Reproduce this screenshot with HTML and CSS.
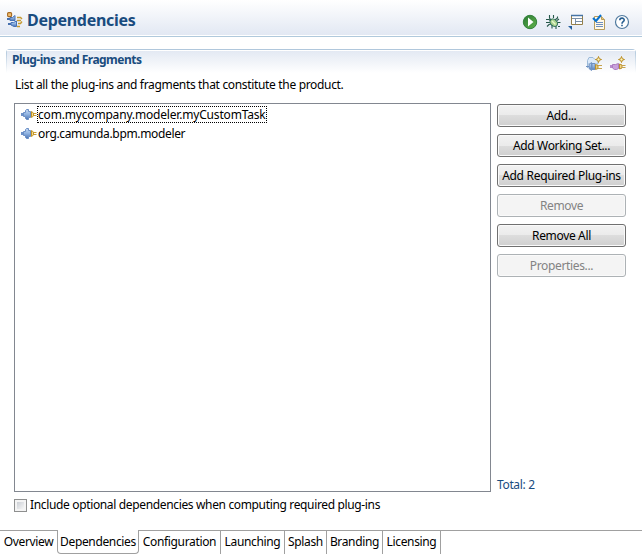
FILE: index.html
```
<!DOCTYPE html>
<html lang="en">
<head>
<meta charset="utf-8">
<title>Dependencies</title>
<link rel="stylesheet" href="styles.css">
</head>
<body>
<svg class="defs" aria-hidden="true">
  <defs>
    <linearGradient id="blue" x1="0" y1="0" x2="0" y2="1"><stop offset="0" stop-color="#c4daf5"/><stop offset=".5" stop-color="#8fb2e0"/><stop offset="1" stop-color="#4a75b5"/></linearGradient>
    <linearGradient id="green" x1="0" y1="0" x2="1" y2="1"><stop offset="0" stop-color="#2b7a35"/><stop offset="1" stop-color="#62b34c"/></linearGradient>
    <symbol id="plug" viewBox="0 0 16 11">
      <path d="M0 5.500H3" stroke="#6f92c8" stroke-width="3"/>
      <path d="M2.500 3.500H4.500V1.500L5.500.5H7.500V2.500H9.500V8.500H7.500V10.500H5.500L4.500 9.500V7.500H2.500Z" fill="url(#blue)" stroke="#6a8fc6"/>
      <path d="M10.500 2.500L12.500 4V7L10.500 8.500Z" fill="#f3dc8c" stroke="#c39428"/>
      <path d="M13 4.500H15.500M13 6.500H15.500" stroke="#c79b35"/>
    </symbol>
  </defs>
</svg>
<div class="editor">
  <header class="header">
    <svg class="page-icon" width="16" height="16" viewBox="0 0 16 16">
      <path d="M10 5.500H13.500L15 7M10 8.500H14M11 11.500H13.500L15 9.500M10 14.500H13" fill="none" stroke="#c69a30" stroke-width="1.400"/>
      <path d="M0 7H3M1 12H4" stroke="#456fae" stroke-width="2"/>
      <path d="M3 5.500H5.500L8 3.500V8.500H3Z" fill="url(#blue)" stroke="#4773b6"/>
      <path d="M4 10.500H6.500L9.500 9V14.500H7L4 13Z" fill="url(#blue)" stroke="#4773b6"/>
      <rect x=".6" y=".6" width="4" height="4" rx="1" fill="#efbd72" stroke="#a66a22" stroke-width="1.100"/>
    </svg>
    <h1>Dependencies</h1>
    <div class="toolbar">
      <svg width="16" height="16" viewBox="0 0 16 16"><circle cx="8" cy="8" r="6.700" fill="url(#green)" stroke="#34823c"/><path d="M6 3.500L11.500 8 6 12.500Z" fill="#fff"/></svg>
      <svg width="16" height="16" viewBox="0 0 16 16"><path d="M4.500 1V4L6 6M8.500 1V4M1 5.500H4L6 7M1 8.500H5M2 12.500L4 10.500 6 10M7 14.500V11M11 15V12M13 12.500H15M12 8.500H15.500M10 6L12.500 4V2.500M12 6.500L14 5" fill="none" stroke="#26584b" stroke-width="1.100"/><ellipse cx="8.800" cy="8.700" rx="4.200" ry="3.200" transform="rotate(42 8.800 8.700)" fill="#a9d18c" stroke="#28695a"/><path d="M7 7L10.500 10.500" stroke="#e5f6cd" stroke-width="1.500"/></svg>
      <svg width="16" height="16" viewBox="0 0 16 16"><path d="M3.500 1.500H14.500V10.500H3.500Z" fill="#fff" stroke="#947f49"/><path d="M3 1.500H15" stroke="#4674a6" stroke-width="1.500"/><path d="M4 4.500H14M7.500 4V10M8 7.500H14" stroke="#7b90a8"/><path d="M0 12H4V16Z" fill="#255f9d"/></svg>
      <svg width="16" height="16" viewBox="0 0 16 16"><path d="M3.500 2.500H10.500L13.500 5.500V15.500H3.500Z" fill="#fff9e8" stroke="#b69b5b"/><path d="M10.500 2.500V5.500H13.500" fill="#e6c77b" stroke="#b69b5b"/><path d="M5 8.500H12M5 10.500H12M5 12.500H12" stroke="#6d8fc1"/><path d="M2 4L5 7 10 1" fill="none" stroke="#0871ce" stroke-width="2"/></svg>
      <svg width="16" height="16" viewBox="0 0 16 16"><circle cx="8" cy="8" r="6.500" fill="#fff" stroke="#507a9f" stroke-width="1.200"/><path d="M5.800 6.200C5.800 3.400 10.200 3.500 10.200 6C10.200 7.800 8 7.700 8 9.700" fill="none" stroke="#285f91" stroke-width="1.600"/><path d="M7.200 10.700H8.800V12.300H7.200Z" fill="#285f91"/></svg>
    </div>
  </header>
  <main class="section">
    <div class="section-head">
      <h2>Plug-ins and Fragments</h2>
      <div class="section-tools">
        <svg width="16" height="16" viewBox="0 0 16 16"><path d="M1.500 12V4.500L3 1.500H7L9 3.500H12V8H1.500Z" fill="#dceafa" stroke="#9bb9d8"/><path d="M0 10.500H3M3 8.500L5.500 6.500V14.500L3 12.500ZM6 7.500H9V13.500H6Z" fill="url(#blue)" stroke="#7092c2"/><path d="M9.500 8.500L12 9.500V12.500L9.500 13.500Z" fill="#ebcf76" stroke="#b98e31"/><path d="M12 9.500H16M12 12.500H16" stroke="#c5a34f"/><path d="M12.500.5L13.300 2.700 15.500 3.500 13.300 4.300 12.500 6.500 11.700 4.300 9.500 3.500 11.700 2.700Z" fill="#fff7ba" stroke="#b98a20"/></svg>
        <svg width="16" height="16" viewBox="0 0 16 16"><path d="M0 10.500H3" stroke="#b98bce" stroke-width="3"/><path d="M2.500 8.500H5.500L8.500 7.500V12.500L6.500 13.500H4.500L2.500 12Z" fill="#c9a0dc" stroke="#aa7bbf"/><path d="M9.500 8L12 9V12L9.500 13Z" fill="#f0d486" stroke="#b98e31"/><path d="M12 9.500H15.500M12 11.500H15.500" stroke="#c5a34f"/><path d="M11.500.5L12.300 2.700 14.500 3.500 12.300 4.300 11.500 6.500 10.700 4.300 8.500 3.500 10.700 2.700Z" fill="#fff7ba" stroke="#b98a20"/></svg>
      </div>
    </div>
    <p class="description">List all the plug-ins and fragments that constitute the product.</p>
    <div class="content">
      <ul class="plugin-list">
        <li><svg width="16" height="11"><use href="#plug"/></svg><span class="focused">com.mycompany.modeler.myCustomTask</span></li>
        <li><svg width="16" height="11"><use href="#plug"/></svg><span class="second">org.camunda.bpm.modeler</span></li>
      </ul>
      <aside class="actions">
        <button>Add...</button>
        <button>Add Working Set...</button>
        <button class="required">Add Required Plug-ins</button>
        <button disabled>Remove</button>
        <button>Remove All</button>
        <button disabled>Properties...</button>
        <div class="total">Total: 2</div>
      </aside>
    </div>
    <label class="option"><span class="check"></span><span>Include optional dependencies when computing required plug-ins</span></label>
  </main>
  <nav class="tabs">
    <div class="tab overview">Overview</div>
    <div class="tab selected">Dependencies</div>
    <div class="tab configuration">Configuration</div>
    <div class="tab launching">Launching</div>
    <div class="tab splash">Splash</div>
    <div class="tab branding">Branding</div>
    <div class="tab licensing">Licensing</div>
    <div class="tab-fill"></div>
  </nav>
</div>
</body>
</html>
```
FILE: styles.css
```
* { box-sizing: border-box; }
body { margin: 0; background: #fff; color: #000; font: 12px/16px "Noto Sans", "Open Sans", sans-serif; letter-spacing: -.35px; white-space: nowrap; }
.defs { position: absolute; width: 0; height: 0; }
svg { flex: none; display: block; }
.editor { width: 642px; height: 556px; display: flex; flex-direction: column; overflow: hidden; }
.header { height: 38px; display: flex; align-items: center; padding: 4px 12px 2px 7px; background: linear-gradient(#fff, #e2e8f3 35px, #fff 35px, #fff 36px, #b0c9dc 36px, #b0c9dc 37px, #fff 37px); }
h1 { margin: 0 0 0 4px; font-size: 16px; line-height: 22px; letter-spacing: -.3px; color: #194c7f; }
.toolbar { display: flex; gap: 7px; margin: 4px 0 0 auto; }
.section { padding: 11px 6px 0; height: 481px; }
.section-head { height: 28px; padding: 3px 10px 0 6px; display: flex; align-items: flex-start; justify-content: space-between; border-radius: 4px 4px 0 0; background: linear-gradient(#e3e9f3, #fff 22px) 1px 2px / calc(100% - 2px) 100% no-repeat, linear-gradient(#fff, #fff) 1px 1px / calc(100% - 2px) 100% no-repeat, linear-gradient(#b0c7dc, #b0c7dc 2px, #fff 24px); }
h2 { margin: 0; font-size: 12px; line-height: 16px; letter-spacing: -.52px; color: #194c7f; }
.section-tools { display: flex; gap: 8px; margin-top: 4px; }
.description { margin: 0 0 0 9px; line-height: 16px; letter-spacing: -.33px; }
.content { display: flex; gap: 6px; margin: 10px 0 0 8px; height: 389px; }
.plugin-list { width: 477px; margin: 0; padding: 1px 6px; border: 1px solid #828790; list-style: none; }
.plugin-list li { height: 19px; display: flex; align-items: center; }
.focused { height: 17px; line-height: 15px; border: 1px dotted #000; width: 230px; letter-spacing: -.18px; }
.second { margin-left: 1px; }
.actions { width: 129px; display: flex; flex-direction: column; gap: 7px; padding-top: 1px; }
button { height: 23px; padding: 0; border: 1px solid #707070; border-radius: 3px; background: linear-gradient(#f2f2f2, #ebebeb 50%, #ddd 50%, #cfcfcf); box-shadow: inset 0 0 0 1px #fafafa; color: #000; font: inherit; letter-spacing: inherit; }
.required { letter-spacing: -.3px; }
button:disabled { border-color: #adb2b5; background: #f4f4f4; color: #838383; }
.total { margin: auto 0 -1px; line-height: 16px; color: #194c7f; }
.option { display: flex; gap: 3px; align-items: center; margin: 5px 0 0 8px; height: 16px; }
.check { width: 13px; height: 13px; border: 1px solid #8e8f8f; background: linear-gradient(135deg, #cbcfd5, #f6f6f6) content-box, #f4f4f4; padding: 2px; }
.tabs { display: flex; height: 24px; margin-top: 11px; }
.tab { border-top: 1px solid #a0a0a0; border-right: 1px solid #a0a0a0; text-align: center; line-height: 22px; height: 24px; }
.overview { width: 57px; border-right: 0; }
.selected { width: 82px; border: 1px solid #a0a0a0; border-top: 0; border-radius: 0 0 4px 4px; padding-top: 1px; }
.configuration { width: 82px; }
.launching { width: 64px; }
.splash { width: 42px; }
.branding { width: 56px; }
.licensing { width: 58px; }
.tab-fill { flex: 1; border-top: 1px solid #a0a0a0; }
```
